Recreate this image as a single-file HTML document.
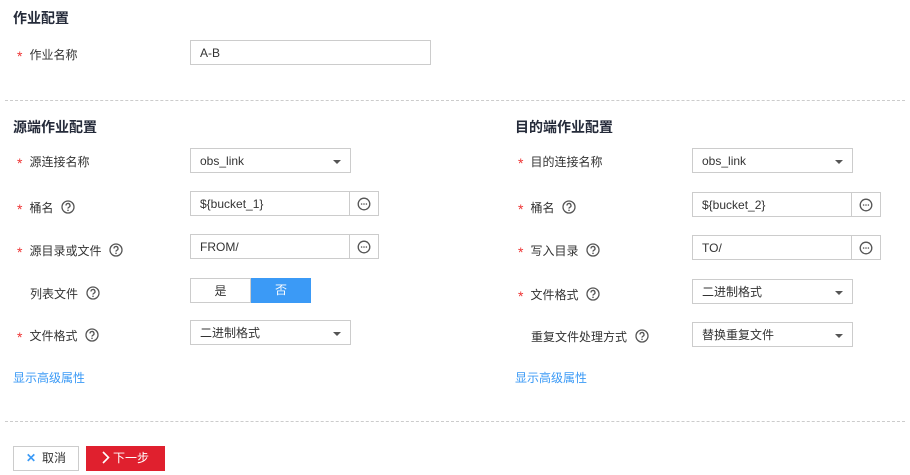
<!DOCTYPE html>
<html><head><meta charset="utf-8"><style>
*{box-sizing:border-box;margin:0;padding:0}
body{width:910px;height:475px;background:#fff;font-family:"Liberation Sans","Noto Sans CJK SC",sans-serif;position:relative;overflow:hidden;color:#333}
.a{position:absolute}
.t{font-size:14px;font-weight:bold;color:#252b3a}
.l{font-size:12px;color:#333;height:24px;display:flex;align-items:center;white-space:nowrap}
.s{color:#e33;margin-right:7px;font-size:14px;line-height:12px;padding-top:3px}
.q{width:14px;height:14px;margin-left:8px;display:block}
.in{border:1px solid #ccc;height:25px;font-size:12px;line-height:24px;padding-left:9px;color:#333;background:#fff}
.dd:after{content:"";position:absolute;right:9px;top:11px;border:4px solid transparent;border-top:4px solid #555}
.btn{border:1px solid #ccc;border-left:none;width:29px;height:25px;background:#fff}
.btn svg{position:absolute;left:7px;top:5px}
.hr{border-top:1px dashed #ccc;height:0}
.lk{font-size:12px;color:#3b9af6}
</style></head><body>
<svg width="0" height="0" style="position:absolute"><defs>
<symbol id="q" viewBox="0 0 14 14"><circle cx="7" cy="7" r="6" fill="none" stroke="#555" stroke-width="1.3"/><path d="M5 5.5a2 2 0 1 1 2.8 1.8c-.6.3-.8.6-.8 1.3" fill="none" stroke="#555" stroke-width="1.3"/><circle cx="7" cy="10.3" r=".8" fill="#555"/></symbol>
<symbol id="e" viewBox="0 0 14 14"><circle cx="7" cy="7" r="5.8" fill="none" stroke="#555" stroke-width="1.3"/><circle cx="4.6" cy="7" r=".8" fill="#555"/><circle cx="7" cy="7" r=".8" fill="#555"/><circle cx="9.4" cy="7" r=".8" fill="#555"/></symbol>
</defs></svg>
<div class="a t" style="left:13px;top:8px">作业配置</div>
<div class="a l" style="left:17px;top:42px"><span class="s">*</span>作业名称</div>
<div class="a in" style="left:190px;top:40px;width:241px">A-B</div>
<div class="a hr" style="left:5px;top:100px;width:900px"></div>

<div class="a t" style="left:13px;top:117px">源端作业配置</div>
<div class="a l" style="left:17px;top:149px"><span class="s">*</span>源连接名称</div>
<div class="a in dd" style="left:190px;top:148px;width:161px">obs_link</div>
<div class="a l" style="left:17px;top:195px"><span class="s">*</span>桶名<svg class="q"><use href="#q"/></svg></div>
<div class="a in" style="left:190px;top:191px;width:160px">${bucket_1}</div>
<div class="a btn" style="left:350px;top:191px"><svg width="14" height="14"><use href="#e"/></svg></div>
<div class="a l" style="left:17px;top:238px"><span class="s">*</span>源目录或文件<svg class="q"><use href="#q"/></svg></div>
<div class="a in" style="left:190px;top:234px;width:160px">FROM/</div>
<div class="a btn" style="left:350px;top:234px"><svg width="14" height="14"><use href="#e"/></svg></div>
<div class="a l" style="left:30px;top:281px">列表文件<svg class="q"><use href="#q"/></svg></div>
<div class="a in" style="left:190px;top:278px;width:61px;text-align:center;padding:0">是</div>
<div class="a" style="left:251px;top:278px;width:60px;height:25px;background:#3b9af6;color:#fff;font-size:12px;line-height:25px;text-align:center">否</div>
<div class="a l" style="left:17px;top:323px"><span class="s">*</span>文件格式<svg class="q"><use href="#q"/></svg></div>
<div class="a in dd" style="left:190px;top:320px;width:161px">二进制格式</div>
<div class="a lk" style="left:13px;top:369px">显示高级属性</div>

<div class="a t" style="left:515px;top:117px">目的端作业配置</div>
<div class="a l" style="left:518px;top:149px"><span class="s">*</span>目的连接名称</div>
<div class="a in dd" style="left:692px;top:148px;width:161px">obs_link</div>
<div class="a l" style="left:518px;top:195px"><span class="s">*</span>桶名<svg class="q"><use href="#q"/></svg></div>
<div class="a in" style="left:692px;top:192px;width:160px">${bucket_2}</div>
<div class="a btn" style="left:852px;top:192px"><svg width="14" height="14"><use href="#e"/></svg></div>
<div class="a l" style="left:518px;top:238px"><span class="s">*</span>写入目录<svg class="q"><use href="#q"/></svg></div>
<div class="a in" style="left:692px;top:235px;width:160px">TO/</div>
<div class="a btn" style="left:852px;top:235px"><svg width="14" height="14"><use href="#e"/></svg></div>
<div class="a l" style="left:518px;top:282px"><span class="s">*</span>文件格式<svg class="q"><use href="#q"/></svg></div>
<div class="a in dd" style="left:692px;top:279px;width:161px">二进制格式</div>
<div class="a l" style="left:531px;top:324px">重复文件处理方式<svg class="q"><use href="#q"/></svg></div>
<div class="a in dd" style="left:692px;top:322px;width:161px">替换重复文件</div>
<div class="a lk" style="left:515px;top:369px">显示高级属性</div>

<div class="a hr" style="left:5px;top:421px;width:900px"></div>
<div class="a" style="left:13px;top:446px;width:66px;height:25px;border:1px solid #ccc;font-size:12px;line-height:23px;text-align:center"><span style="color:#3b9af6;font-weight:bold;margin-right:6px">✕</span>取消</div>
<div class="a" style="left:86px;top:446px;width:79px;height:25px;background:#e0202e;color:#fff;font-size:12px;line-height:25px;padding-left:16px"><svg width="8" height="13" viewBox="0 0 8 13" style="vertical-align:-2px;margin-right:3px"><path d="M1 1L6.5 6.5L1 12" stroke="#fff" stroke-width="1.6" fill="none"/></svg>下一步</div>
</body></html>
